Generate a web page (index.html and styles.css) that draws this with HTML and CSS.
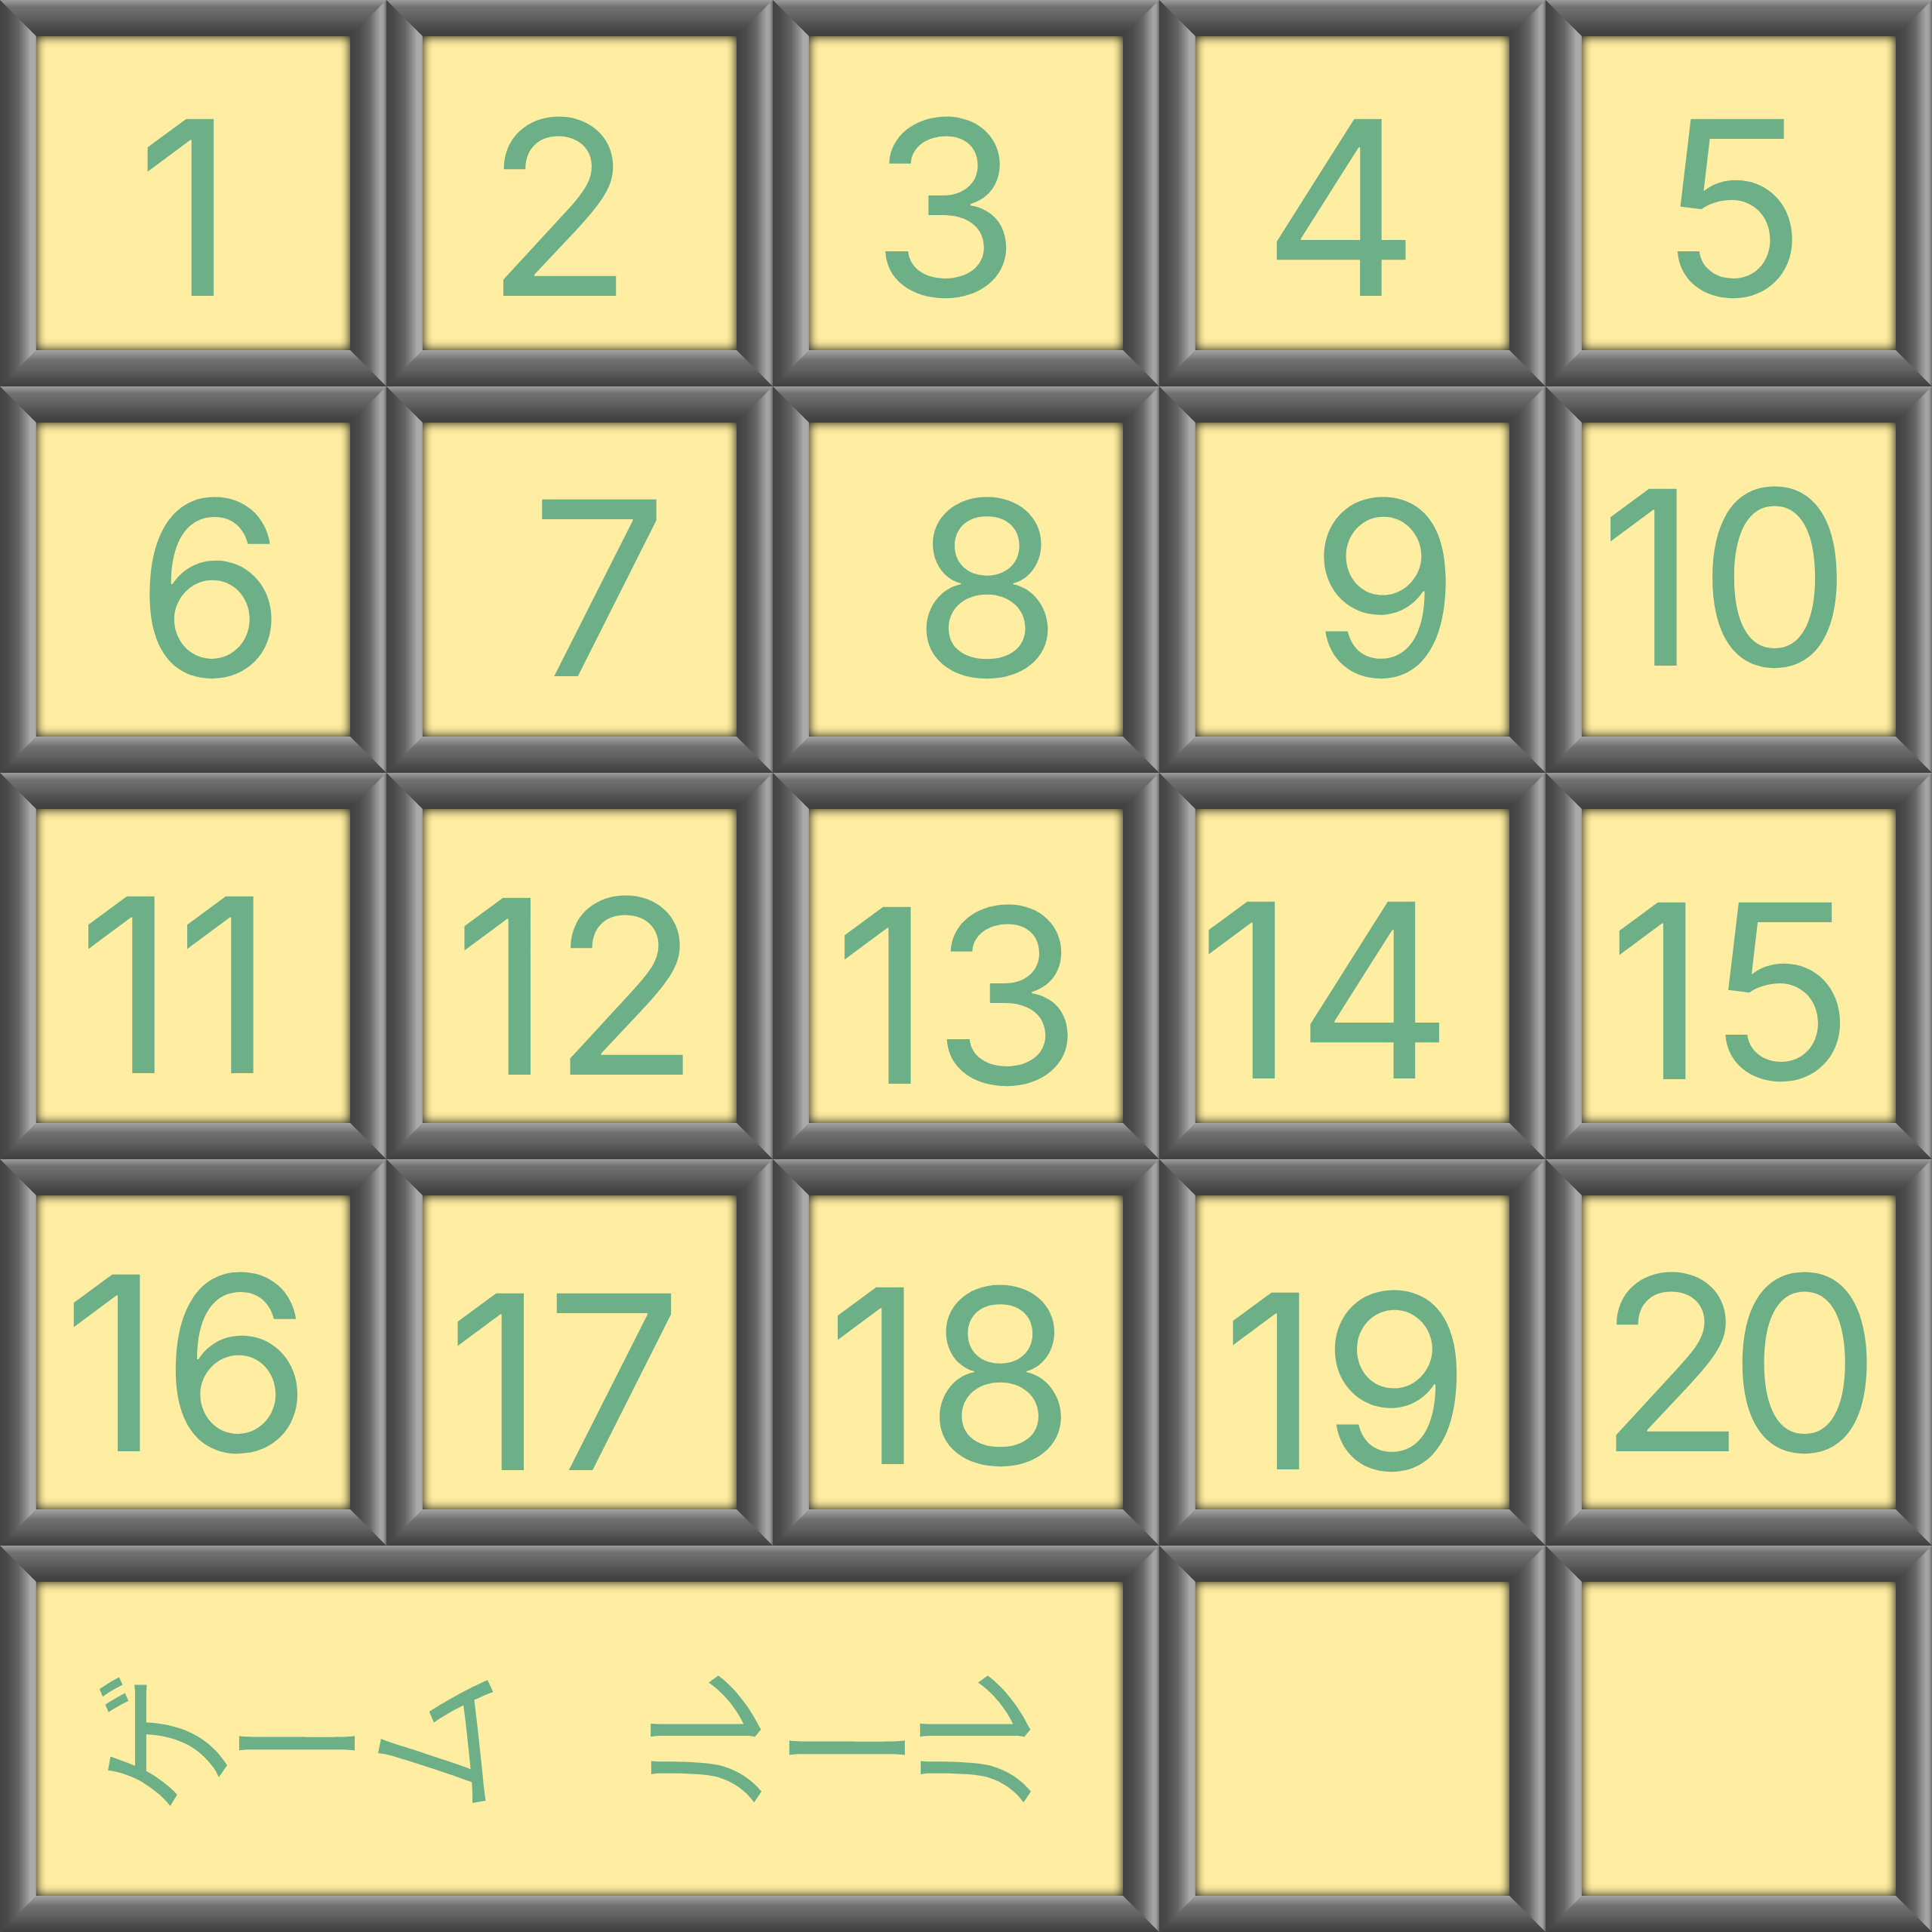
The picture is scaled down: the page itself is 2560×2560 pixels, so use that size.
FILE: index.html
```html
<!DOCTYPE html>
<html lang="ja">
<head>
<meta charset="utf-8">
<title>Tiles</title>
<link rel="stylesheet" href="styles.css">
</head>
<body>
<div class="board">
  <div class="tile"><div class="face"><span class="num n1">1</span></div></div>
  <div class="tile"><div class="face"><span class="num n2">2</span></div></div>
  <div class="tile"><div class="face"><span class="num n3">3</span></div></div>
  <div class="tile"><div class="face"><span class="num n4">4</span></div></div>
  <div class="tile"><div class="face"><span class="num n5">5</span></div></div>
  <div class="tile"><div class="face"><span class="num n6">6</span></div></div>
  <div class="tile"><div class="face"><span class="num n7">7</span></div></div>
  <div class="tile"><div class="face"><span class="num n8">8</span></div></div>
  <div class="tile"><div class="face"><span class="num n9">9</span></div></div>
  <div class="tile"><div class="face"><span class="num n10">10</span></div></div>
  <div class="tile"><div class="face"><span class="num n11">11</span></div></div>
  <div class="tile"><div class="face"><span class="num n12">12</span></div></div>
  <div class="tile"><div class="face"><span class="num n13">13</span></div></div>
  <div class="tile"><div class="face"><span class="num n14">14</span></div></div>
  <div class="tile"><div class="face"><span class="num n15">15</span></div></div>
  <div class="tile"><div class="face"><span class="num n16">16</span></div></div>
  <div class="tile"><div class="face"><span class="num n17">17</span></div></div>
  <div class="tile"><div class="face"><span class="num n18">18</span></div></div>
  <div class="tile"><div class="face"><span class="num n19">19</span></div></div>
  <div class="tile"><div class="face"><span class="num n20">20</span></div></div>
  <div class="tile wide"><div class="face"><span class="jp">ゲーム　ル<span class="bar">ー</span>ル</span></div></div>
  <div class="tile"><div class="face"></div></div>
  <div class="tile"><div class="face"></div></div>
</div>
</body>
</html>
```

FILE: styles.css
```css
html, body {
  margin: 0;
  padding: 0;
  background: #404040;
}

.board {
  display: grid;
  grid-template-columns: repeat(5, 512px);
  grid-auto-rows: 512px;
  width: 2560px;
}

.tile {
  position: relative;
  box-sizing: border-box;
  padding: 48px;
  background:
    linear-gradient(to bottom, #9c9c9c 0, #8a8a8a 4px, #6e6e6e 10px, #636363 22px, #4e4e4e 34px, #424242 42px, #404040 48px) top / 100% 48px no-repeat,
    linear-gradient(to bottom, #a2a2a2 0, #909090 5px, #6e6e6e 14px, #626262 26px, #4c4c4c 38px, #404040 48px) bottom / 100% 48px no-repeat,
    #555555;
}

.tile.wide {
  grid-column: span 3;
}

.tile::before {
  content: "";
  position: absolute;
  inset: 0;
  clip-path: polygon(0 0, 48px 48px, calc(100% - 48px) 48px, 100% 0, 100% 100%, calc(100% - 48px) calc(100% - 48px), 48px calc(100% - 48px), 0 100%);
  background:
    linear-gradient(to right, #444444 0, #4a4a4a 10px, #626262 24px, #8a8a8a 34px, #a8a8a8 40px, #aaaaaa 46px, #9a9a9a 48px) left top / 48px 100% no-repeat,
    linear-gradient(to right, #424242 0, #4a4a4a 12px, #666666 26px, #959595 36px, #a6a6a6 40px, #a0a0a0 44px, #6a6a6a 48px) right top / 48px 100% no-repeat;
}

.face {
  position: relative;
  height: 100%;
  background: #ffeea1;
  box-shadow: inset 0 0 14px rgba(0, 0, 0, 0.95);
  display: flex;
  align-items: center;
  justify-content: center;
}

.num {
  font-family: Inter, "Liberation Sans", sans-serif;
  font-size: 322px;
  line-height: 1;
  color: #6db088;
  white-space: nowrap;
}

.jp {
  flex: none;
  font-family: "Noto Sans CJK JP", sans-serif;
  font-size: 195px;
  letter-spacing: -16.5px;
  line-height: 1;
  color: #6db088;
  writing-mode: vertical-rl;
  white-space: nowrap;
  transform: translate(-23.5px, 5px) rotate(-90deg);
}

.jp .bar {
  display: inline-block;
  transform: translate(-6px, 14.5px);
}

.n1 { transform: translate(-10px, 19px); }
.n2 { transform: translate(-27px, 19px); }
.n3 { transform: translate(-27px, 19px); }
.n4 { transform: translate(-15px, 19px); }
.n5 { transform: translate(-8px, 19px); }
.n6 { transform: translate(23px, 11px); }
.n7 { transform: translate(26px, 11px); }
.n8 { transform: translate(28px, 11px); }
.n9 { transform: translate(43px, 11px); }
.n10 { transform: translate(-18px, -3px); }
.n11 { transform: translate(-23px, 25px); }
.n12 { transform: translate(-4px, 27px); }
.n13 { transform: translate(-11px, 39px); }
.n14 { transform: translate(-36px, 32px); }
.n15 { transform: translate(-10px, 33px); }
.n16 { transform: translate(-8px, 14px); }
.n17 { transform: translate(-20px, 39px); }
.n18 { transform: translate(-20px, 31px); }
.n19 { transform: translate(-8px, 38px); }
.n20 { letter-spacing: -24px; transform: translate(-11px, 14px); }
```
